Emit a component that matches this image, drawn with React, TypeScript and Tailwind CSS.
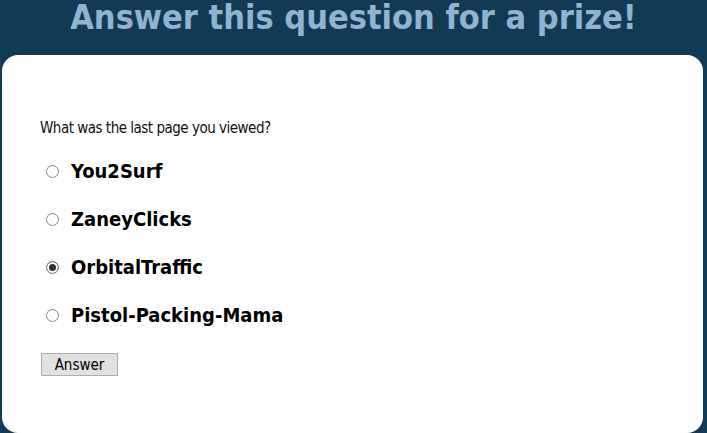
import { useState } from "react";

const options = ["You2Surf", "ZaneyClicks", "OrbitalTraffic", "Pistol-Packing-Mama"];

const App = () => {
  const [picked, setPicked] = useState("OrbitalTraffic");

  return (
    <div
      className="h-[433px] w-full overflow-hidden bg-[#133a55]"
      style={{ fontFamily: '"DejaVu Sans Condensed", "DejaVu Sans", sans-serif' }}
    >
      <h1 className="text-center text-[34px] font-bold leading-[34px] text-[#8fb3d1]">
        Answer this question for a prize!
      </h1>
      <div className="ml-[2px] mr-[4px] mt-[21px] h-[378px] rounded-[16px] bg-white px-[38px] pt-[63px]">
        <p className="text-[15px] leading-[20px] tracking-[-0.5px] text-[#111]">
          What was the last page you viewed?
        </p>
        <div className="mt-[21px] flex flex-col gap-[24px]">
          {options.map((opt) => (
            <label key={opt} className="flex items-center gap-[12px] pl-[6px] cursor-pointer">
              <input
                type="radio"
                name="page"
                className="m-0 h-[13px] w-[13px] appearance-none rounded-full border border-[#8a8a8a] bg-white checked:bg-[#333] checked:shadow-[inset_0_0_0_2px_white]"
                checked={picked === opt}
                onChange={() => setPicked(opt)}
              />
              <span className="text-[20px] font-bold leading-[24px] text-black">{opt}</span>
            </label>
          ))}
        </div>
        <button className="mt-[26px] ml-[1px] h-[23px] w-[77px] border border-[#adadad] bg-[#e1e1e1] text-[15px] leading-[20px] text-black">
          Answer
        </button>
      </div>
    </div>
  );
};

export default App;
